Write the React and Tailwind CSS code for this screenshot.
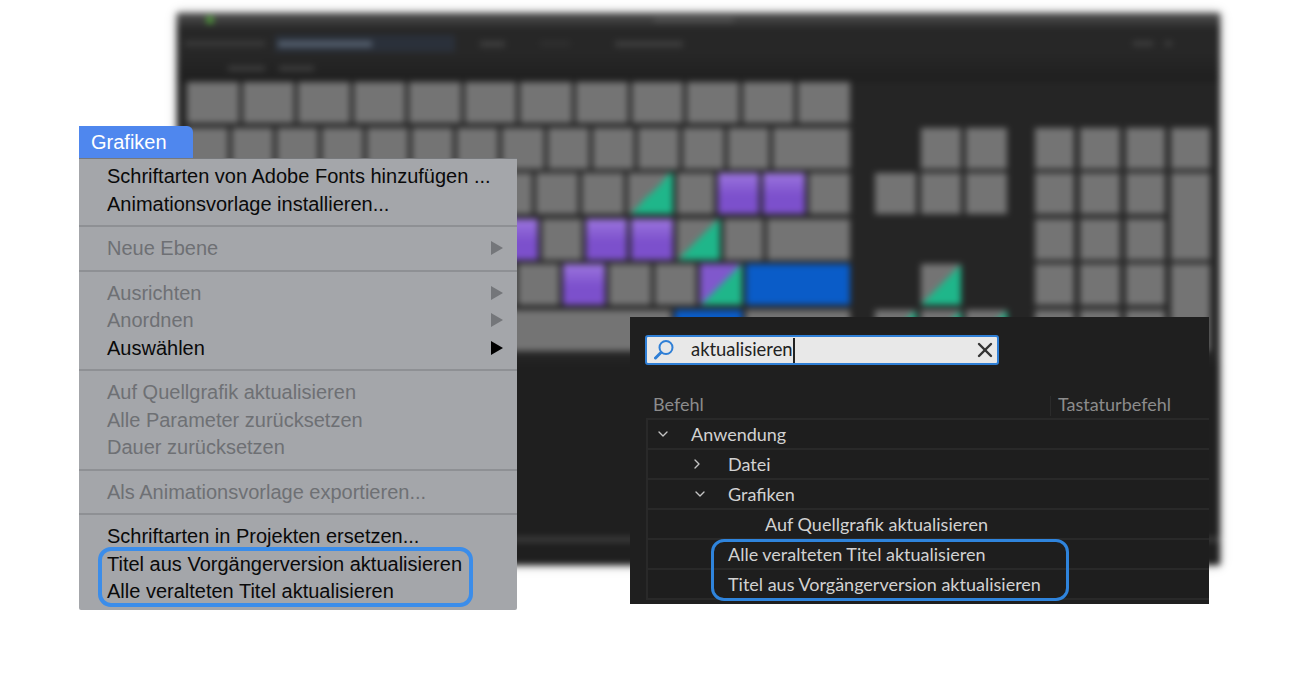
import { ChevronDown, ChevronRight, X } from "lucide-react";

const MAC_FONT = "font-['Liberation_Sans',Arial,sans-serif]";
const ADOBE_FONT = "font-['Lato','Noto_Sans',sans-serif]";

const KEY_STYLES = {
  gray: "bg-[#747474]",
  purple: "bg-[linear-gradient(#9c76de,#7c50cc_55%)]",
  green: "bg-[linear-gradient(135deg,#747474_50%,#1fb68a_50%)]",
  split: "bg-[linear-gradient(135deg,#8058cc_50%,#1fb68a_50%)]",
  blue: "bg-[#0a5cc8]",
};

const Key = ({ width, kind = "gray", className = "" }) => (
  <div
    className={`h-full ${KEY_STYLES[kind]} ${className}`}
    style={width ? { width, flexShrink: 0 } : { flex: 1 }}
  />
);

const mainRows = [
  Array.from({ length: 12 }, () => ({})),
  [{ width: 41 }, ...Array.from({ length: 12 }, () => ({})), { width: 77 }],
  [
    { width: 345 },
    { width: 42 },
    { width: 42 },
    { width: 45, kind: "green" },
    { width: 37 },
    { width: 41, kind: "purple" },
    { width: 42, kind: "purple" },
    { width: 41 },
  ],
  [
    { width: 306 },
    { width: 41, kind: "purple" },
    { width: 40 },
    { width: 41, kind: "purple" },
    { width: 42, kind: "purple" },
    { width: 43, kind: "green" },
    { width: 39 },
    { width: 83 },
  ],
  [
    { width: 327 },
    { width: 41 },
    { width: 42, kind: "purple" },
    { width: 42 },
    { width: 41 },
    { width: 42, kind: "split" },
    { width: 104, kind: "blue" },
  ],
  [{ width: 484 }, { width: 67, kind: "blue" }, { width: 104 }],
];

const Keyboard = () => (
  <div className="flex pl-[10px]">
    <div className="flex w-[663px] flex-col gap-[4.6px]">
      {mainRows.map((row, i) => (
        <div key={i} className="flex h-[41px] gap-[4px]">
          {row.map((k, j) => (
            <Key key={j} width={k.width} kind={k.kind} />
          ))}
        </div>
      ))}
    </div>
    <div className="ml-[25px] mt-[45.6px] grid w-[132px] grid-cols-3 auto-rows-[41px] gap-x-[5px] gap-y-[4.6px]">
      <Key className="col-start-2" />
      <Key />
      <Key />
      <Key />
      <Key />
      <Key className="col-start-2 row-start-4" kind="green" />
      <Key className="row-start-5" kind="green" />
      <Key className="row-start-5" kind="green" />
      <Key className="row-start-5" kind="green" />
    </div>
    <div className="ml-[28px] mt-[45.6px] grid w-[175px] grid-cols-4 auto-rows-[41px] gap-x-[6px] gap-y-[4.6px]">
      {Array.from({ length: 4 }, (_, i) => (
        <Key key={i} />
      ))}
      <Key />
      <Key />
      <Key />
      <Key className="row-span-2" />
      <Key />
      <Key />
      <Key />
      <Key />
      <Key />
      <Key />
      <Key className="row-span-2" />
      <Key />
      <Key />
      <Key />
    </div>
  </div>
);

const BackgroundWindow = () => (
  <div className="absolute left-[177px] top-[13px] flex h-[552px] w-[1043px] flex-col bg-[linear-gradient(#252525_62%,#1f1f1f_64%)] shadow-[0_0_8px_rgba(0,0,0,0.4)] blur-[3px]">
    <div className="flex h-[14px] items-center bg-[linear-gradient(#525252,#2e2e2e)] pl-[29px]">
      <div className="h-[8px] w-[8px] rounded-full bg-[#4f9a3a]" />
      <div className="ml-[440px] h-[4px] w-[80px] bg-[#555555]" />
    </div>
    <div className="flex h-[27px] items-center bg-[#272727] pl-[8px] pt-[6px]">
      <div className="h-[5px] w-[80px] bg-[#3c3c3c]" />
      <div className="ml-[10px] flex h-[17px] w-[180px] items-center bg-[#2a303a] pl-[3px]">
        <div className="h-[6px] w-[94px] bg-[#56616f]" />
      </div>
      <div className="ml-[25px] h-[6px] w-[25px] bg-[#3e3e3e]" />
      <div className="ml-[35px] h-[5px] w-[30px] bg-[#303030]" />
      <div className="ml-[45px] h-[6px] w-[68px] bg-[#3e3e3e]" />
      <div className="ml-[450px] h-[5px] w-[20px] bg-[#3e3e3e]" />
      <div className="ml-[12px] h-[5px] w-[7px] bg-[#3e3e3e]" />
    </div>
    <div className="flex h-[28px] items-center gap-[14px] bg-[linear-gradient(#272727,#1f1f1f)] pl-[51px]">
      <div className="h-[5px] w-[37px] bg-[#3e3e3e]" />
      <div className="h-[5px] w-[35px] bg-[#3e3e3e]" />
    </div>
    <Keyboard />
    <div className="mt-auto mb-[23px] h-[5px] w-full bg-[#3e3e3e]" />
  </div>
);

const MenuItem = ({ label, disabled, submenu }) => (
  <div
    className={`flex h-[27.5px] items-center justify-between pl-[28px] pr-[14px] text-[20px] leading-none ${
      disabled ? "text-[#6e7074]" : "text-[#0a0a0a]"
    }`}
  >
    <span>{label}</span>
    {submenu && (
      <svg width="12" height="14" viewBox="0 0 12 14" className={disabled ? "text-[#74767a]" : "text-black"}>
        <polygon points="0,0 12,7 0,14" fill="currentColor" />
      </svg>
    )}
  </div>
);

const MenuDivider = () => <div className="my-[7.5px] h-[2px] bg-[#8e9094]" />;

const GraphicsMenu = () => (
  <div className={`absolute left-[79px] top-[126px] w-[438px] ${MAC_FONT}`}>
    <div className="flex h-[32px] w-[114px] items-center rounded-tr-[6px] bg-[#4f87ee] pl-[12px] text-[20px] text-white">
      Grafiken
    </div>
    <div className="relative h-[452px] rounded-b-[2px] border-t border-[#77797c] bg-[#a4a6aa] pt-[3.5px]">
      <MenuItem label="Schriftarten von Adobe Fonts hinzufügen ..." />
      <MenuItem label="Animationsvorlage installieren..." />
      <MenuDivider />
      <MenuItem label="Neue Ebene" disabled submenu />
      <MenuDivider />
      <MenuItem label="Ausrichten" disabled submenu />
      <MenuItem label="Anordnen" disabled submenu />
      <MenuItem label="Auswählen" submenu />
      <MenuDivider />
      <MenuItem label="Auf Quellgrafik aktualisieren" disabled />
      <MenuItem label="Alle Parameter zurücksetzen" disabled />
      <MenuItem label="Dauer zurücksetzen" disabled />
      <MenuDivider />
      <MenuItem label="Als Animationsvorlage exportieren..." disabled />
      <MenuDivider />
      <MenuItem label="Schriftarten in Projekten ersetzen..." />
      <MenuItem label="Titel aus Vorgängerversion aktualisieren" />
      <MenuItem label="Alle veralteten Titel aktualisieren" />
      <div className="absolute left-[19px] top-[388px] h-[60px] w-[375px] rounded-[13px] border-4 border-[#3b8dea]" />
    </div>
  </div>
);

const TreeRow = ({ indent, icon, iconWidth, label }) => (
  <div className="flex h-[30px] items-center border-b-2 border-[#292929] text-[18px] text-[#d2d2d2]" style={{ paddingLeft: indent }}>
    {icon && (
      <span className="flex pl-[2px]" style={{ width: iconWidth }}>
        {icon}
      </span>
    )}
    <span>{label}</span>
  </div>
);

const ShortcutPanel = () => (
  <div className={`absolute left-[630px] top-[317px] h-[287px] w-[579px] overflow-hidden bg-[#1f1f1f] pt-[18px] ${ADOBE_FONT}`}>
    <div className="ml-[15px] flex h-[30px] w-[354px] items-center rounded-[3px] border-2 border-[#2f7fd6] bg-[#e8e8e8]">
      <svg width="22" height="22" viewBox="0 0 22 22" className="ml-[7px]" fill="none">
        <circle cx="12" cy="8.5" r="6.5" stroke="#2f7fd6" strokeWidth="2" />
        <path d="M7 13.5 L1.5 19" stroke="#2f7fd6" strokeWidth="3" strokeLinecap="round" />
      </svg>
      <span className="ml-[15px] text-[18.4px] text-[#222222]">aktualisieren</span>
      <span className="h-[25px] w-[2px] bg-[#222222]" />
      <X className="ml-auto h-[24px] w-[24px] text-[#333333]" strokeWidth={2.4} />
    </div>
    <div className="ml-[23px] flex h-[53px] items-end text-[18px] text-[#8c8c8c]">
      <span className="w-[397px]">Befehl</span>
      <span className="mb-[2px] h-[20px] w-px bg-[#2b2b2b]" />
      <span className="ml-[7px]">Tastaturbefehl</span>
    </div>
    <div className="relative ml-[16px] border-l-2 border-t-2 border-[#292929] bg-[#1e1e1e]">
      <TreeRow indent={5} iconWidth={38} icon={<ChevronDown className="h-[16px] w-[16px] text-[#c4c4c4]" />} label="Anwendung" />
      <TreeRow indent={39} iconWidth={41} icon={<ChevronRight className="h-[16px] w-[16px] text-[#c4c4c4]" />} label="Datei" />
      <TreeRow indent={42} iconWidth={38} icon={<ChevronDown className="h-[16px] w-[16px] text-[#c4c4c4]" />} label="Grafiken" />
      <TreeRow indent={117} label="Auf Quellgrafik aktualisieren" />
      <TreeRow indent={80} label="Alle veralteten Titel aktualisieren" />
      <TreeRow indent={80} label="Titel aus Vorgängerversion aktualisieren" />
      <div className="absolute left-[63px] top-[119px] h-[62px] w-[358px] rounded-[13px] border-[3.5px] border-[#2f84dc]" />
    </div>
  </div>
);

const App = () => {
  return (
    <div className="relative h-screen w-full overflow-hidden bg-white">
      <BackgroundWindow />
      <GraphicsMenu />
      <ShortcutPanel />
    </div>
  );
};

export default App;
